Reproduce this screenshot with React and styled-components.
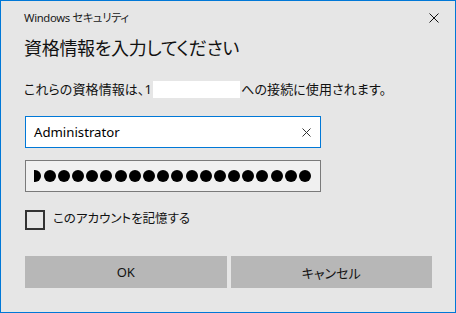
import React from "react";
import styled, { createGlobalStyle } from "styled-components";

const Global = createGlobalStyle`
  html, body { margin: 0; padding: 0; background: #e6e6e6; }
  * { box-sizing: border-box; }
  body {
    font-family: "Noto Sans", "Noto Sans CJK JP", sans-serif;
    font-feature-settings: "palt";
    color: #000;
  }
`;

const Dialog = styled.div`
  width: 456px;
  height: 313px;
  border: 1px solid #0078d7;
  background: #e6e6e6;
  padding: 0 23px 0 24px;
  display: flex;
  flex-direction: column;
`;

const Header = styled.div`
  display: flex;
  align-items: center;
  justify-content: space-between;
  height: 16px;
  margin-top: 9px;
  margin-left: -1px;
  margin-right: -7px;
`;

const Caption = styled.div`
  font-size: 11.3px;
  line-height: 16px;
  letter-spacing: -0.35px;
  color: #1a1a1a;
`;

const Heading = styled.div`
  font-size: 18px;
  line-height: 24px;
  margin-top: 10px;
  margin-left: -1px;
  letter-spacing: -0.3px;
  color: #111;
`;

const Description = styled.div`
  font-size: 13px;
  line-height: 18px;
  margin-top: 20px;
  margin-left: -1px;
  letter-spacing: 0.1px;
  display: flex;
  align-items: center;
  color: #111;
`;

const Redacted = styled.span`
  display: inline-block;
  width: 87px;
  height: 17px;
  margin: 0 1px;
  background: #fff;
`;

const Field = styled.div`
  width: 296px;
  height: 32px;
  margin-top: ${(p) => p.$top}px;
  border: 1px solid ${(p) => (p.$focused ? "#0078d7" : "#7a7a7a")};
  background: ${(p) => (p.$focused ? "#fff" : "#f0f0f0")};
  display: flex;
  align-items: center;
  padding: 0 9px 0 8px;
  overflow: hidden;
`;

const FieldText = styled.span`
  flex: 1;
  font-size: 13.2px;
  color: #000;
`;

const Dots = styled.div`
  flex: 1;
  display: flex;
  justify-content: flex-end;
  overflow: hidden;
  gap: 2.2px;
`;

const Dot = styled.span`
  flex-shrink: 0;
  width: 12px;
  height: 12px;
  border-radius: 50%;
  background: #000;
`;

const CheckRow = styled.label`
  display: flex;
  align-items: center;
  gap: 8px;
  margin-top: 18px;
  height: 20px;
`;

const Box = styled.span`
  width: 20px;
  height: 20px;
  border: 2px solid #333;
  flex-shrink: 0;
`;

const CheckLabel = styled.span`
  font-size: 12.5px;
  line-height: 18px;
  color: #111;
  margin-top: -2px;
`;

const Buttons = styled.div`
  display: grid;
  grid-template-columns: 1fr 1fr;
  gap: 4px;
  margin-top: 26px;
`;

const Button = styled.div`
  height: 32px;
  background: #b7b7b7;
  display: flex;
  align-items: center;
  justify-content: center;
  font-size: 13px;
  color: #111;
`;

const Cross = ({ size, color, stroke = 1 }) => (
  <svg width={size} height={size} viewBox={`0 0 ${size} ${size}`}>
    <path
      d={`M0.5 0.5 L${size - 0.5} ${size - 0.5} M${size - 0.5} 0.5 L0.5 ${size - 0.5}`}
      stroke={color}
      strokeWidth={stroke}
      fill="none"
    />
  </svg>
);

export default function App() {
  return (
    <>
      <Global />
      <Dialog>
        <Header>
          <Caption>Windows セキュリティ</Caption>
          <Cross size={10} color="#111" />
        </Header>
        <Heading>資格情報を入力してください</Heading>
        <Description>
          これらの資格情報は、1<Redacted />への接続に使用されます。
        </Description>
        <Field $focused $top={18}>
          <FieldText>Administrator</FieldText>
          <Cross size={9} color="#333" />
        </Field>
        <Field $top={12}>
          <Dots>
            {Array.from({ length: 22 }).map((_, i) => (
              <Dot key={i} />
            ))}
          </Dots>
        </Field>
        <CheckRow>
          <Box />
          <CheckLabel>このアカウントを記憶する</CheckLabel>
        </CheckRow>
        <Buttons>
          <Button>OK</Button>
          <Button>キャンセル</Button>
        </Buttons>
      </Dialog>
    </>
  );
}
